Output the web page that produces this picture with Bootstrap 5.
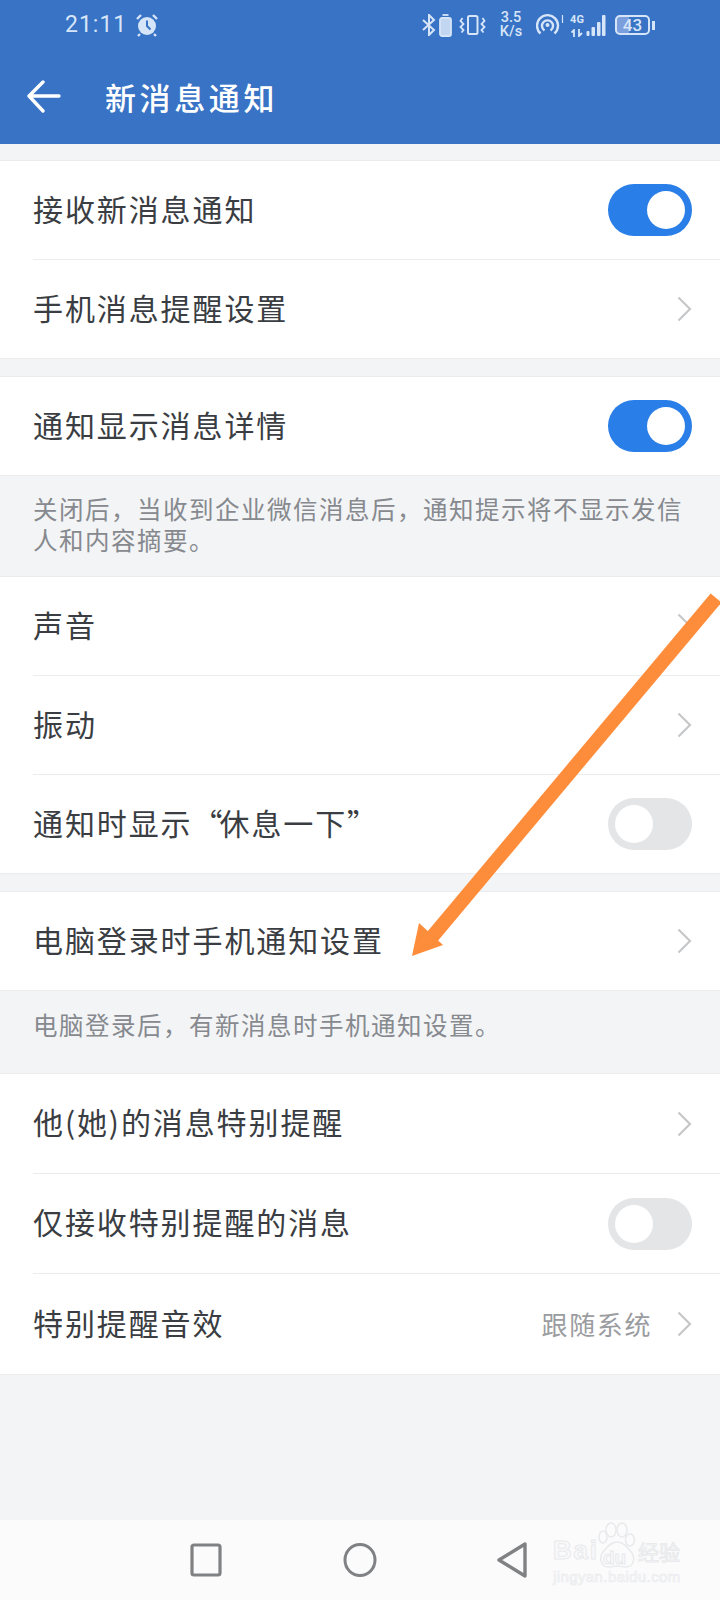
<!DOCTYPE html>
<html lang="zh-CN">
<head>
<meta charset="utf-8">
<title>新消息通知</title>
<link href="https://cdn.jsdelivr.net/npm/bootstrap@5.3.0/dist/css/bootstrap.min.css" rel="stylesheet">
<style>
html,body{height:1600px;margin:0;overflow:hidden}
body{background:#f3f4f6;font-family:"Noto Sans CJK SC","Noto Sans",sans-serif;color:#3a3d42;width:720px}
.stage{height:1600px;position:relative}
.app-head{background:#3873c5;height:144px;color:#fff}
.status-line{height:50px;padding:0 65px;color:#d7e5f8}
.clock{font-family:Roboto,sans-serif;font-size:23px;letter-spacing:1px;width:70px}
.speed{font-family:Roboto,sans-serif;font-weight:500;font-size:14.5px;line-height:14px;text-align:center;width:24px;margin:0 13px}
.net-kind{font:700 11px/11px Roboto,sans-serif;width:14px;margin-left:5px}
.cell-bars{margin-left:2px}
.batt-box{width:35px;height:20px;border:2px solid #d7e5f8;border-radius:5px;margin-left:9px;font:500 17px/16px Roboto,sans-serif;text-align:center;background:linear-gradient(90deg,#7a9fdc 40%,transparent 40%)}
.batt-tip{width:3px;height:9px;background:#d7e5f8;margin-left:2px}
.title-line{height:94px;padding-left:27px}
.page-title{font-size:31px;letter-spacing:3.6px;margin:0 0 2px 44px;font-weight:500;line-height:1}
.settings-group{background:#fff;border-top:1px solid #ebecee;border-bottom:1px solid #ebecee;border-radius:0}
.settings-item{border:0;padding:0 0 0 33px;background:transparent;border-radius:0;color:inherit}
.settings-row{height:99px;padding-right:28px;font-size:30px;letter-spacing:1.9px;border-bottom:1px solid #ebecee}
.settings-row>span:first-child{margin-bottom:4px}
.settings-item:last-child .settings-row{border-bottom:0;height:98px}
.roomy .settings-row{height:100px}
.roomy .settings-item:last-child .settings-row{height:100px}
.open-quote{letter-spacing:-3px}
.top-gap{height:16px}
.sep-gap{height:17px}
.helper{font-size:24.5px;letter-spacing:1.5px;line-height:31px;color:#86898e;padding:17px 30px 0 33px}
.helper-a{height:100px}
.helper-b{height:82px;padding-top:18px}
.toggle-pill{width:84px;height:52px;border-radius:26px;background:#e4e5e7;position:relative;flex:none}
.toggle-pill::after{content:"";position:absolute;top:7px;left:7px;width:38px;height:38px;border-radius:50%;background:#fff}
.toggle-pill.is-on{background:#2a7ee8}
.toggle-pill.is-on::after{left:39px}
.side-value{color:#9a9c9f;font-size:26px;letter-spacing:1.6px;margin-right:25px;margin-bottom:2px}
.soft-nav{height:80px;background:#fbfbfc;position:absolute;left:0;right:0;bottom:0;padding-left:190px;gap:121px}
.nav-back{margin-left:-2px}
.arrow-over{position:absolute;left:0;top:0;pointer-events:none}
.mark-over{position:absolute;left:553px;top:1522px;width:130px;height:70px;color:#f9f9fa;-webkit-text-stroke:1px #e9eaec;font-family:"Liberation Sans",sans-serif;letter-spacing:0}
.mark-over span{position:absolute;white-space:nowrap}
.mark-over .bai{left:0;top:13px;font-size:26px;line-height:30px;font-weight:700;letter-spacing:1.8px}
.mark-over .du{left:50px;top:26px;font-size:19px;line-height:20px;font-weight:700}
.mark-over .jy{left:85px;top:17px;font-size:21px;line-height:24px;font-family:"Noto Sans CJK SC",sans-serif}
.mark-over .url{left:0;top:47px;font-size:15px;line-height:16px;letter-spacing:.4px;-webkit-text-stroke:.6px #e9eaec}
.mark-over svg{position:absolute;left:44px;top:0}
</style>
</head>
<body>
<div class="stage">
  <header class="app-head">
    <div class="status-line d-flex align-items-center">
      <span class="clock">21:11</span>
      <svg width="24" height="24" viewBox="0 0 24 24"><circle cx="12" cy="13" r="9" fill="#d7e5f8"/><path d="M12 7.500V13l3.500 3.500" fill="none" stroke="#3873c5" stroke-width="2"/><path d="M2 6l4-4M22 6l-4-4M5 21l-2 2M19 21l2 2" stroke="#d7e5f8" stroke-width="2.400" fill="none"/></svg>
      <div class="d-flex align-items-center ms-auto">
        <svg width="14" height="22" viewBox="0 0 14 22" fill="none" stroke="#d7e5f8" stroke-width="2"><path d="M1 6l11 10-5 5V1l5 5L1 16"/></svg>
        <svg style="margin-left:3px" width="13" height="23" viewBox="0 0 13 23" fill="none" stroke="#d7e5f8" stroke-width="1.800"><rect x="1" y="4" width="11" height="18" rx="2" fill="#c3d6f1"/><path d="M3.500 1h6"/></svg>
        <svg style="margin-left:7px" width="27" height="20" viewBox="0 0 27 20" fill="none" stroke="#d7e5f8" stroke-width="2"><rect x="9" y="1" width="9.500" height="18" rx="1.500"/><path d="M3.500 3L1.500 6l3 3-3 3 3 3-2 2.500M23.500 3l2 3-3 3 3 3-3 3 2 2.500" stroke-width="1.800"/></svg>
        <div class="speed">3.5<br>K/s</div>
        <svg width="29" height="22" viewBox="0 0 29 22" fill="none" stroke="#d7e5f8" stroke-width="2.400"><path d="M4.500 19.500a10.500 10.500 0 1 1 14 0M8.500 16.500a5.500 5.500 0 1 1 6 0"/><circle cx="11.500" cy="11" r="2" fill="#d7e5f8" stroke="none"/><path d="M26.500 1v8" stroke-width="1.200"/></svg>
        <div class="d-flex flex-column net-kind align-items-center"><span>4G</span><svg class="mt-1" width="13" height="8" viewBox="0 0 13 8" fill="none" stroke="#d7e5f8" stroke-width="1.800"><path d="M3 8V1L0.500 3.500M8 0v7l3-3"/></svg></div>
        <svg class="cell-bars" width="20" height="23" viewBox="0 0 20 23" fill="#d7e5f8"><rect x="0.500" y="17" width="3" height="5" rx="1"/><rect x="5.500" y="13" width="3.500" height="9" rx="1"/><rect x="11" y="8" width="3.500" height="14" rx="1"/><rect x="16" y="1" width="3.500" height="21" rx="1"/></svg>
        <div class="batt-box">43</div>
        <span class="batt-tip"></span>
      </div>
    </div>
    <div class="title-line d-flex align-items-center">
      <svg width="34" height="34" viewBox="0 0 34 34" fill="none" stroke="#fff" stroke-width="3.400" stroke-linecap="round" stroke-linejoin="round"><path d="M2 16h30M16 2L2 16l14 15"/></svg>
      <h1 class="page-title">新消息通知</h1>
    </div>
  </header>

  <div class="top-gap"></div>
  <div class="list-group settings-group">
    <div class="list-group-item settings-item"><div class="settings-row d-flex align-items-center justify-content-between"><span>接收新消息通知</span><span class="toggle-pill is-on"></span></div></div>
    <div class="list-group-item settings-item"><div class="settings-row d-flex align-items-center justify-content-between"><span>手机消息提醒设置</span><svg width="15" height="26" viewBox="0 0 15 26" fill="none" stroke="#c6c7c9" stroke-width="2.200"><path d="M1.500 1.500L13 13 1.500 24.500"/></svg></div></div>
  </div>
  <div class="sep-gap"></div>
  <div class="list-group settings-group">
    <div class="list-group-item settings-item"><div class="settings-row d-flex align-items-center justify-content-between"><span>通知显示消息详情</span><span class="toggle-pill is-on"></span></div></div>
  </div>
  <div class="helper helper-a">关闭后，当收到企业微信消息后，通知提示将不显示发信人和内容摘要。</div>
  <div class="list-group settings-group">
    <div class="list-group-item settings-item"><div class="settings-row d-flex align-items-center justify-content-between"><span>声音</span><svg width="15" height="26" viewBox="0 0 15 26" fill="none" stroke="#c6c7c9" stroke-width="2.200"><path d="M1.500 1.500L13 13 1.500 24.500"/></svg></div></div>
    <div class="list-group-item settings-item"><div class="settings-row d-flex align-items-center justify-content-between"><span>振动</span><svg width="15" height="26" viewBox="0 0 15 26" fill="none" stroke="#c6c7c9" stroke-width="2.200"><path d="M1.500 1.500L13 13 1.500 24.500"/></svg></div></div>
    <div class="list-group-item settings-item"><div class="settings-row d-flex align-items-center justify-content-between"><span>通知时显示<span class="open-quote">“</span>休息一下”</span><span class="toggle-pill"></span></div></div>
  </div>
  <div class="sep-gap"></div>
  <div class="list-group settings-group">
    <div class="list-group-item settings-item"><div class="settings-row d-flex align-items-center justify-content-between"><span>电脑登录时手机通知设置</span><svg width="15" height="26" viewBox="0 0 15 26" fill="none" stroke="#c6c7c9" stroke-width="2.200"><path d="M1.500 1.500L13 13 1.500 24.500"/></svg></div></div>
  </div>
  <div class="helper helper-b">电脑登录后，有新消息时手机通知设置。</div>
  <div class="list-group settings-group roomy">
    <div class="list-group-item settings-item"><div class="settings-row d-flex align-items-center justify-content-between"><span>他(她)的消息特别提醒</span><svg width="15" height="26" viewBox="0 0 15 26" fill="none" stroke="#c6c7c9" stroke-width="2.200"><path d="M1.500 1.500L13 13 1.500 24.500"/></svg></div></div>
    <div class="list-group-item settings-item"><div class="settings-row d-flex align-items-center justify-content-between"><span>仅接收特别提醒的消息</span><span class="toggle-pill"></span></div></div>
    <div class="list-group-item settings-item"><div class="settings-row d-flex align-items-center justify-content-between"><span>特别提醒音效</span><span class="d-flex align-items-center"><span class="side-value">跟随系统</span><svg width="15" height="26" viewBox="0 0 15 26" fill="none" stroke="#c6c7c9" stroke-width="2.200"><path d="M1.500 1.500L13 13 1.500 24.500"/></svg></span></div></div>
  </div>

  <nav class="soft-nav d-flex align-items-center">
    <svg width="32" height="34" viewBox="0 0 32 34" fill="none" stroke="#808183" stroke-width="3.200" stroke-linejoin="round"><rect x="2" y="2" width="28" height="30" rx="2"/></svg>
    <svg width="34" height="36" viewBox="0 0 34 36" fill="none" stroke="#808183" stroke-width="3"><ellipse cx="17" cy="18" rx="15" ry="15.500"/></svg>
    <svg class="nav-back" width="32" height="38" viewBox="0 0 32 38" fill="none" stroke="#808183" stroke-width="3.400" stroke-linejoin="round"><path d="M29 3v32L3 19z"/></svg>
  </nav>
  <div class="mark-over">
    <svg width="42" height="50" viewBox="0 0 42 50" fill="none" stroke="#e9eaec" stroke-width="1.500"><ellipse cx="6" cy="15" rx="4" ry="6"/><ellipse cx="14" cy="8" rx="5" ry="7"/><ellipse cx="25" cy="8" rx="5" ry="7"/><ellipse cx="33" cy="18" rx="4.500" ry="6"/><path d="M20 20c-7 0-10 6-14 10-4 5-3 15 6 15 4 0 6-1 8-1s5 1 9 1c8 0 9-9 6-14-4-5-8-11-15-11z"/></svg>
    <span class="bai">Bai</span><span class="du">du</span><span class="jy">经验</span><span class="url">jingyan.baidu.com</span>
  </div>
  <svg class="arrow-over" width="720" height="1600" viewBox="0 0 720 1600"><path d="M716 598L432 937" stroke="#fe8d3b" stroke-width="14" fill="none"/><path d="M412 956l7-33 24 22z" fill="#fe8d3b"/></svg>
</div>
</body>
</html>
